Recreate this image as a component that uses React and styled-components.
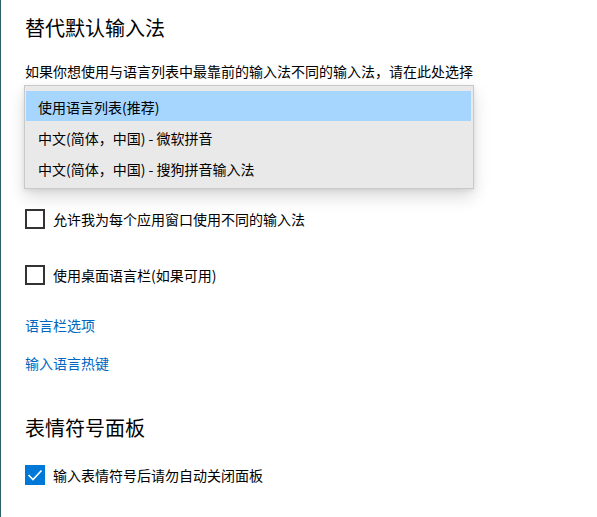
import React from "react";
import styled, { createGlobalStyle } from "styled-components";

const GlobalStyle = createGlobalStyle`
  html, body {
    margin: 0;
    padding: 0;
    background: #ffffff;
  }
  body {
    font-family: "Noto Sans CJK SC", "Noto Sans", "Liberation Sans", sans-serif;
    color: #000000;
  }
`;

const Page = styled.main`
  box-sizing: border-box;
  min-height: 517px;
  border-left: 1px solid #2c5f69;
  padding: 14px 0 0 24px;
  display: flex;
  flex-direction: column;
  align-items: flex-start;
`;

const Heading = styled.h2`
  margin: ${(p) => p.$top || 0}px 0 0;
  font-size: 20px;
  line-height: 28px;
  font-weight: 400;
  color: #000;
`;

const Description = styled.p`
  margin: 19px 0 0;
  font-size: 14px;
  line-height: 20px;
  color: #000;
`;

const SelectWrap = styled.div`
  position: relative;
  margin-top: 4px;
  width: 450px;
  height: 32px;
`;

const Popup = styled.ul`
  position: absolute;
  top: 0;
  left: -1px;
  z-index: 2;
  box-sizing: border-box;
  width: 450px;
  margin: 0;
  padding: 5px 1px 4px 1px;
  list-style: none;
  background: #e9e9e9;
  border: 1px solid #c9c9c9;
  box-shadow: 0 8px 16px rgba(0, 0, 0, 0.14), 0 2px 5px rgba(0, 0, 0, 0.08);
`;

const Option = styled.li`
  height: 31px;
  padding-left: 12px;
  display: flex;
  align-items: center;
  font-size: 14px;
  color: #000;
  background: ${(p) => (p.$selected ? "#a6d6fd" : "transparent")};
  box-shadow: ${(p) => (p.$selected ? "inset 0 -1px 0 #e9e9e9" : "none")};
  margin-right: 1px;
`;

const CheckRow = styled.label`
  margin-top: ${(p) => p.$top}px;
  display: flex;
  align-items: center;
  gap: 8px;
  font-size: 14px;
  line-height: 20px;
  color: #000;
`;

const Box = styled.span`
  box-sizing: border-box;
  width: 20px;
  height: 20px;
  flex: none;
  display: flex;
  align-items: center;
  justify-content: center;
  border: ${(p) => (p.$checked ? "none" : "2px solid #333333")};
  background: ${(p) => (p.$checked ? "#0078d7" : "#ffffff")};
`;

const Link = styled.a`
  margin-top: ${(p) => p.$top}px;
  font-size: 14px;
  line-height: 20px;
  color: #0067c0;
  text-decoration: none;
`;

function Checkbox({ checked, top, children }) {
  return (
    <CheckRow $top={top}>
      <Box $checked={checked}>
        {checked && (
          <svg width="20" height="20" viewBox="0 0 20 20">
            <polyline
              points="3.5,10 8,14.5 16.5,5.5"
              fill="none"
              stroke="#ffffff"
              strokeWidth="1.6"
            />
          </svg>
        )}
      </Box>
      {children}
    </CheckRow>
  );
}

const options = [
  "使用语言列表(推荐)",
  "中文(简体，中国) - 微软拼音",
  "中文(简体，中国) - 搜狗拼音输入法",
];

export default function App() {
  return (
    <>
      <GlobalStyle />
      <Page>
        <Heading>替代默认输入法</Heading>
        <Description>
          如果你想使用与语言列表中最靠前的输入法不同的输入法，请在此处选择
        </Description>
        <SelectWrap>
          <Popup>
            {options.map((o, i) => (
              <Option key={o} $selected={i === 0}>
                {o}
              </Option>
            ))}
          </Popup>
        </SelectWrap>
        <Checkbox top={92}>允许我为每个应用窗口使用不同的输入法</Checkbox>
        <Checkbox top={36}>使用桌面语言栏(如果可用)</Checkbox>
        <Link href="#" $top={30}>
          语言栏选项
        </Link>
        <Link href="#" $top={18}>
          输入语言热键
        </Link>
        <Heading $top={41}>表情符号面板</Heading>
        <Checkbox checked top={23}>
          输入表情符号后请勿自动关闭面板
        </Checkbox>
      </Page>
    </>
  );
}
